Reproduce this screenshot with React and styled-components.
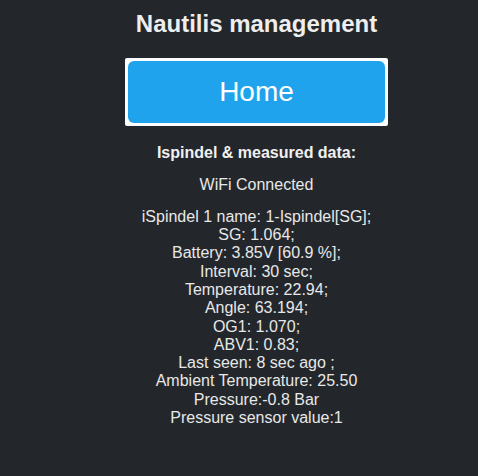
import React from "react";
import styled, { createGlobalStyle } from "styled-components";

const Global = createGlobalStyle`
  html, body {
    margin: 0;
    padding: 0;
    background: #23272b;
  }
  body {
    font-family: "Liberation Sans", Arial, sans-serif;
    color: #e8e8e8;
  }
`;

const Page = styled.main`
  display: flex;
  flex-direction: column;
  align-items: center;
  padding: 10px 0 0 35px;
  min-height: 476px;
  box-sizing: border-box;
`;

const Title = styled.h1`
  margin: 0;
  font-size: 24px;
  line-height: 28px;
  font-weight: bold;
  color: #eeeeee;
`;

const ButtonFrame = styled.div`
  margin-top: 20px;
  padding: 3px;
  background: #ffffff;
  border-radius: 2px;
  display: flex;
`;

const HomeButton = styled.button`
  width: 257px;
  height: 62px;
  border: none;
  border-radius: 6px;
  background: #1fa3ec;
  color: #ffffff;
  font-family: "Liberation Sans", Arial, sans-serif;
  font-size: 28px;
  padding: 0;
  cursor: pointer;
`;

const Heading = styled.h2`
  margin: 18px 0 0;
  font-size: 16px;
  font-weight: bold;
  line-height: 18.4px;
  color: #f0f0f0;
`;

const Status = styled.p`
  margin: 14px 0 0;
  font-size: 16px;
  line-height: 18.4px;
`;

const DataList = styled.div`
  margin-top: 13px;
  display: flex;
  flex-direction: column;
  align-items: center;
  font-size: 16px;
  line-height: 18.3px;
`;

const DataLine = styled.span`
  white-space: pre;
`;

const lines = [
  "iSpindel 1 name: 1-Ispindel[SG];",
  "SG: 1.064;",
  "Battery: 3.85V [60.9 %];",
  "Interval: 30 sec;",
  "Temperature: 22.94;",
  "Angle: 63.194;",
  "OG1: 1.070;",
  "ABV1: 0.83;",
  "Last seen: 8 sec ago ;",
  "Ambient Temperature: 25.50",
  "Pressure:-0.8 Bar",
  "Pressure sensor value:1",
];

export default function App() {
  return (
    <>
      <Global />
      <Page>
        <Title>Nautilis management</Title>
        <ButtonFrame>
          <HomeButton>Home</HomeButton>
        </ButtonFrame>
        <Heading>Ispindel &amp; measured data:</Heading>
        <Status>WiFi Connected</Status>
        <DataList>
          {lines.map((l) => (
            <DataLine key={l}>{l}</DataLine>
          ))}
        </DataList>
      </Page>
    </>
  );
}
